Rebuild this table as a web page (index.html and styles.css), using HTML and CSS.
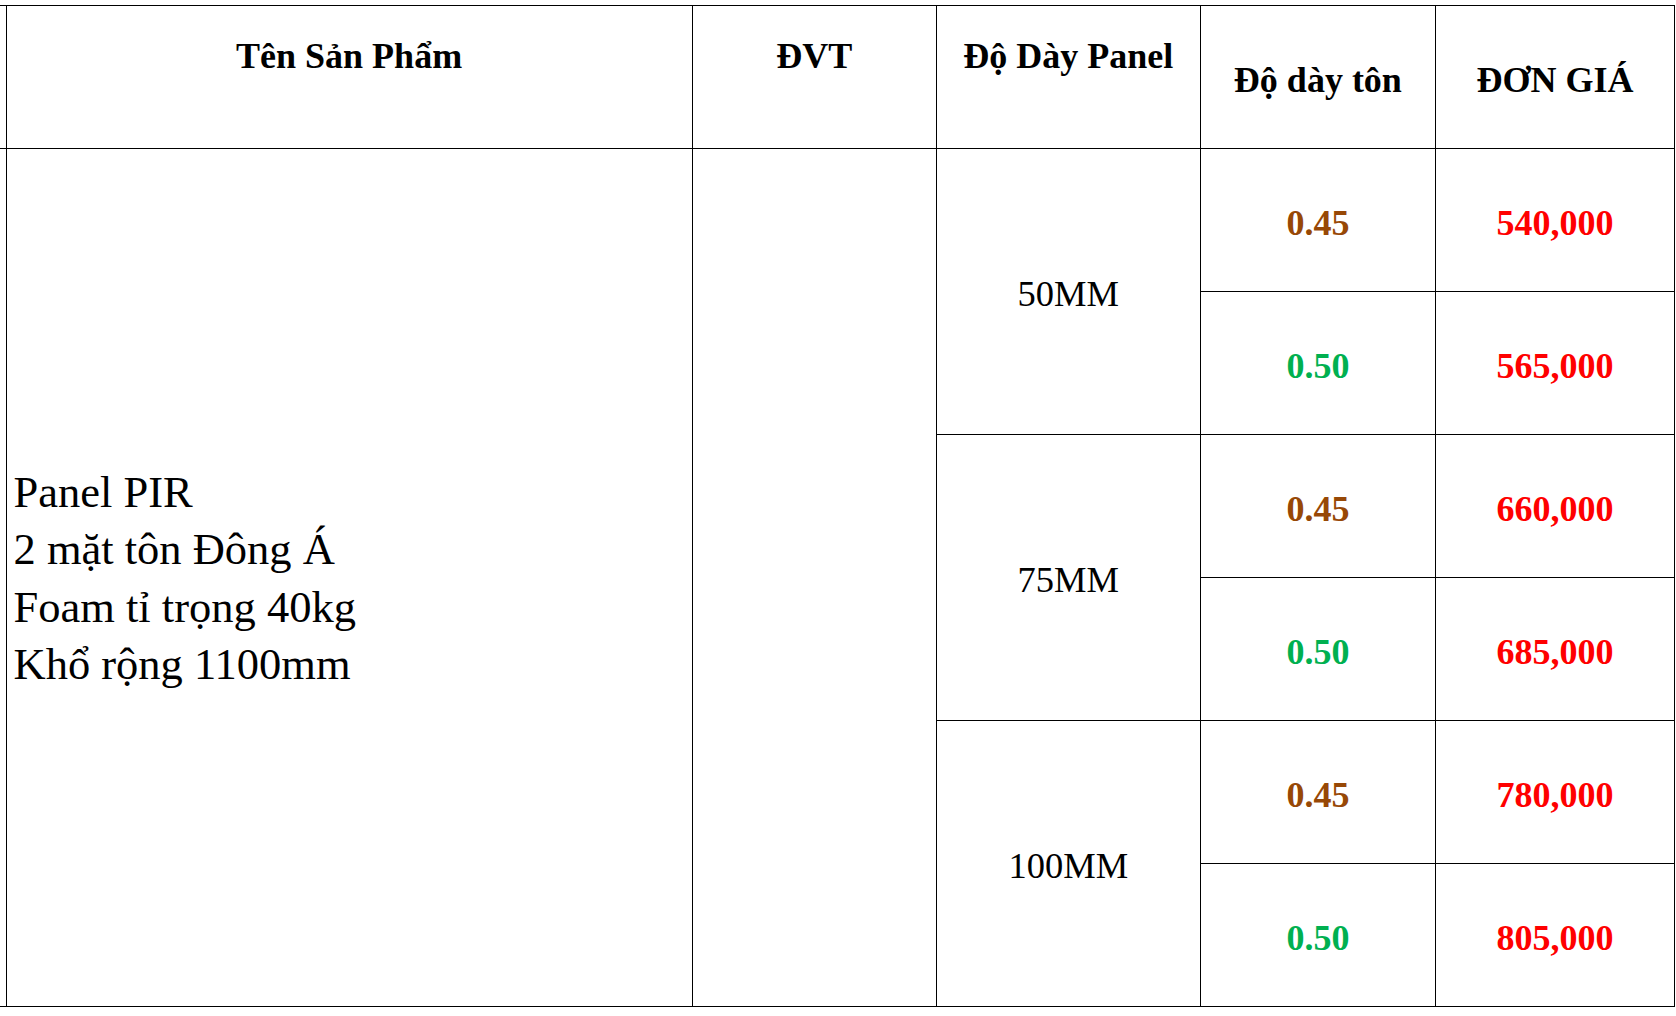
FILE: index.html
```html
<!DOCTYPE html>
<html lang="vi">
<head>
<meta charset="utf-8">
<title>Bảng giá Panel PIR</title>
<link rel="stylesheet" href="styles.css">
</head>
<body>
<div class="sheet">
  <table class="price">
    <colgroup>
      <col class="c-stub">
      <col class="c-name">
      <col class="c-unit">
      <col class="c-panel">
      <col class="c-ton">
      <col class="c-price">
    </colgroup>
    <thead>
      <tr>
        <th class="stub"></th>
        <th class="top">Tên Sản Phẩm</th>
        <th class="top">ĐVT</th>
        <th class="top">Độ Dày Panel</th>
        <th class="mid">Độ dày tôn</th>
        <th class="mid">ĐƠN GIÁ</th>
      </tr>
    </thead>
    <tbody>
      <tr>
        <td class="stub" rowspan="6"></td>
        <td class="name" rowspan="6">Panel PIR<br>2 mặt tôn Đông Á<br>Foam tỉ trọng 40kg<br>Khổ rộng 1100mm</td>
        <td rowspan="6"></td>
        <td class="thick" rowspan="2">50MM</td>
        <td class="num brown">0.45</td>
        <td class="num red">540,000</td>
      </tr>
      <tr>
        <td class="num green">0.50</td>
        <td class="num red">565,000</td>
      </tr>
      <tr>
        <td class="thick" rowspan="2">75MM</td>
        <td class="num brown">0.45</td>
        <td class="num red">660,000</td>
      </tr>
      <tr>
        <td class="num green">0.50</td>
        <td class="num red">685,000</td>
      </tr>
      <tr>
        <td class="thick" rowspan="2">100MM</td>
        <td class="num brown">0.45</td>
        <td class="num red">780,000</td>
      </tr>
      <tr>
        <td class="num green">0.50</td>
        <td class="num red">805,000</td>
      </tr>
    </tbody>
  </table>
</div>
</body>
</html>
```

FILE: styles.css
```css
html, body {
  margin: 0;
  padding: 0;
  background: #ffffff;
}

body {
  font-family: "Liberation Serif", "Times New Roman", serif;
  color: #000000;
}

.sheet {
  padding-top: 5px;
}

.price {
  border-collapse: collapse;
  table-layout: fixed;
  width: 1675px;
}

.c-stub { width: 6px; }
.c-name { width: 686px; }
.c-unit { width: 244px; }
.c-panel { width: 264px; }
.c-ton { width: 235px; }
.c-price { width: 239px; }

.price th,
.price td {
  border: 1px solid #000000;
  padding: 0;
  text-align: center;
  vertical-align: middle;
}

.price tr {
  height: 143px;
}

.price th {
  font-size: 36px;
  line-height: 40px;
  font-weight: bold;
}

.price th.top {
  vertical-align: top;
  padding-top: 30px;
}

.price th.mid {
  padding-top: 6px;
}

.price .stub {
  border-left: none;
}

.price td.name {
  text-align: left;
  font-size: 44.5px;
  line-height: 57.5px;
  padding-left: 7px;
  padding-top: 2px;
}

.price td.thick {
  font-size: 36.5px;
  line-height: 40px;
  padding-top: 5px;
}

.price td.num {
  font-size: 36px;
  line-height: 40px;
  font-weight: bold;
  padding-top: 6px;
}

.brown { color: #974806; }
.green { color: #00b050; }
.red { color: #ff0000; }
```
